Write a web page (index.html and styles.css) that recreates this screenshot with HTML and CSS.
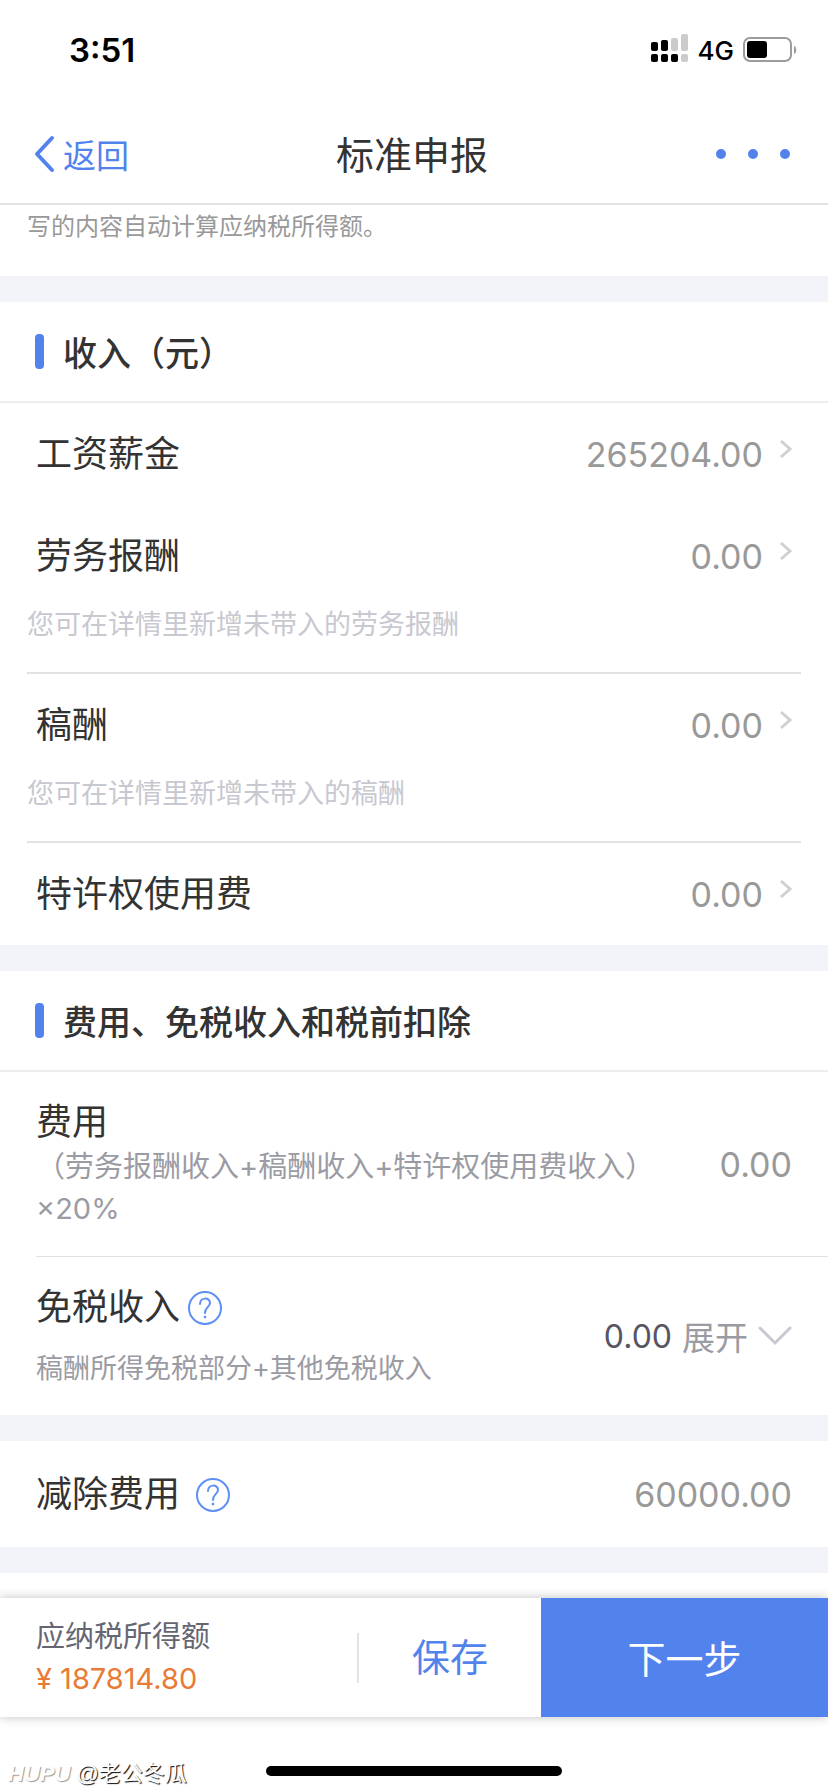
FILE: index.html
```html
<!DOCTYPE html>
<html lang="zh-CN">
<head>
    <meta charset="UTF-8">
    <meta name="viewport" content="width=device-width, initial-scale=1.0">
    <title>标准申报</title>
    <link rel="stylesheet" href="styles.css">
</head>
<body>
    <div class="screen">
        <div class="status-bar">
            <span class="time">3:51</span>
            <div class="status-icons">
                <svg class="signal" width="38" height="30" viewBox="0 0 38 30">
                    <g fill="#000">
                        <rect x="0" y="9" width="7" height="9" rx="2"/>
                        <rect x="10" y="7" width="7" height="11" rx="2"/>
                        <rect x="0" y="21" width="7" height="8" rx="2"/>
                        <rect x="10" y="21" width="7" height="8" rx="2"/>
                        <rect x="20" y="21" width="7" height="8" rx="2"/>
                    </g>
                    <g fill="#cbcbcb">
                        <rect x="20" y="5" width="7" height="13" rx="2"/>
                        <rect x="30" y="1" width="7" height="17" rx="2"/>
                        <rect x="30" y="21" width="7" height="8" rx="2"/>
                    </g>
                </svg>
                <span class="network">4G</span>
                <svg class="battery" width="54" height="26" viewBox="0 0 54 26">
                    <rect x="1" y="1" width="47" height="23" rx="6" fill="none" stroke="#9c9c9c" stroke-width="2"/>
                    <rect x="4" y="4" width="20" height="17" rx="3" fill="#000"/>
                    <path d="M51 9c3 1 3 7 0 8z" fill="#9c9c9c"/>
                </svg>
            </div>
        </div>

        <header class="nav-bar">
            <a class="back" href="#">
                <svg width="21" height="38" viewBox="0 0 21 38">
                    <path d="M18 3L3 19l15 16" fill="none" stroke="#5283ec" stroke-width="4" stroke-linecap="round" stroke-linejoin="round"/>
                </svg>
                返回
            </a>
            <h1>标准申报</h1>
            <button class="more" type="button" aria-label="更多">
                <svg width="74" height="10" viewBox="0 0 74 10" fill="#5283ec">
                    <circle cx="5" cy="5" r="5"/>
                    <circle cx="37" cy="5" r="5"/>
                    <circle cx="69" cy="5" r="5"/>
                </svg>
            </button>
        </header>

        <main>
            <p class="note">写的内容自动计算应纳税所得额。</p>

            <section class="card">
                <h2>收入（元）</h2>
                <a class="row" href="#">
                    <span class="label">工资薪金</span>
                    <span class="value">265204.00</span>
                    <svg class="arrow" width="13" height="20" viewBox="0 0 13 20"><path d="M2 2l9 8-9 8"/></svg>
                </a>
                <a class="row" href="#">
                    <span class="label">劳务报酬</span>
                    <span class="value">0.00</span>
                    <svg class="arrow" width="13" height="20" viewBox="0 0 13 20"><path d="M2 2l9 8-9 8"/></svg>
                </a>
                <p class="hint">您可在详情里新增未带入的劳务报酬</p>
                <a class="row" href="#">
                    <span class="label">稿酬</span>
                    <span class="value">0.00</span>
                    <svg class="arrow" width="13" height="20" viewBox="0 0 13 20"><path d="M2 2l9 8-9 8"/></svg>
                </a>
                <p class="hint">您可在详情里新增未带入的稿酬</p>
                <a class="row" href="#">
                    <span class="label">特许权使用费</span>
                    <span class="value">0.00</span>
                    <svg class="arrow" width="13" height="20" viewBox="0 0 13 20"><path d="M2 2l9 8-9 8"/></svg>
                </a>
            </section>

            <section class="card">
                <h2>费用、免税收入和税前扣除</h2>
                <div class="detail">
                    <div class="detail-text">
                        <div class="label">费用</div>
                        <p class="formula">（劳务报酬收入+稿酬收入+特许权使用费收入）×20%</p>
                    </div>
                    <span class="value">0.00</span>
                </div>
                <div class="detail">
                    <div class="detail-text">
                        <div class="label">
                            免税收入
                            <button class="help" type="button" aria-label="免税收入说明">
                                <svg width="34" height="34" viewBox="0 0 34 34" fill="none" stroke="#5e8ff2" stroke-width="2">
                                    <circle cx="17" cy="17" r="16"/>
                                    <path d="M12 13c0-7 10-7 10-1 0 4-5 4-5 10" stroke-linecap="round"/>
                                    <circle cx="17" cy="26" r="1" fill="#5e8ff2" stroke-width="1"/>
                                </svg>
                            </button>
                        </div>
                        <p class="sub">稿酬所得免税部分+其他免税收入</p>
                    </div>
                    <button class="expand" type="button">
                        <span class="amount">0.00</span>
                        展开
                        <svg width="34" height="20" viewBox="0 0 34 20"><path d="M2 2l15 15L32 2" fill="none" stroke="#c8c8d0" stroke-width="3" stroke-linecap="round"/></svg>
                    </button>
                </div>
            </section>

            <section class="card deduction">
                <div class="label">
                    减除费用
                    <button class="help" type="button" aria-label="减除费用说明">
                        <svg width="34" height="34" viewBox="0 0 34 34" fill="none" stroke="#5e8ff2" stroke-width="2">
                            <circle cx="17" cy="17" r="16"/>
                            <path d="M12 13c0-7 10-7 10-1 0 4-5 4-5 10" stroke-linecap="round"/>
                            <circle cx="17" cy="26" r="1" fill="#5e8ff2" stroke-width="1"/>
                        </svg>
                    </button>
                </div>
                <span class="value">60000.00</span>
            </section>

            <section class="card next-card"></section>
        </main>

        <footer class="action-bar">
            <div class="total">
                <div>应纳税所得额</div>
                <div class="total-amount">¥ 187814.80</div>
            </div>
            <button class="save" type="button">保存</button>
            <button class="next" type="button">下一步</button>
        </footer>

        <div class="home-area">
            <div class="watermark"><em>HUPU</em> @老公冬瓜</div>
            <div class="home-indicator"></div>
        </div>
    </div>
</body>
</html>
```
FILE: styles.css
```css
* {
    box-sizing: border-box;
}
body {
    margin: 0;
    background-color: #fff;
    color: #333;
    font-family: Inter, "Noto Sans CJK SC", sans-serif;
}
h1, h2, p {
    margin: 0;
    font-weight: 400;
}
a {
    color: inherit;
    text-decoration: none;
}
button {
    padding: 0;
    border: none;
    background: none;
    color: inherit;
    font-family: inherit;
    cursor: pointer;
}
svg {
    display: block;
    flex: none;
}
.screen {
    display: flex;
    flex-direction: column;
    min-height: 100vh;
}

/* status bar */
.status-bar {
    display: flex;
    justify-content: space-between;
    align-items: center;
    height: 104px;
    padding: 0 31px 4px 69px;
    color: #000;
}
.time {
    font-size: 33px;
    font-weight: 600;
}
.status-icons {
    display: flex;
    align-items: center;
    gap: 9px;
}
.signal {
    margin-bottom: 4px;
}
.network {
    font-size: 26px;
    font-weight: 500;
}

/* navigation */
.nav-bar {
    display: grid;
    grid-template-columns: 1fr auto 1fr;
    align-items: center;
    height: 101px;
    padding: 0 38px 0 34px;
    border-bottom: 2px solid #e2e2e2;
}
.back {
    display: flex;
    align-items: center;
    gap: 8px;
    color: #5283ec;
    font-size: 33px;
}
.nav-bar h1 {
    padding-bottom: 2px;
    font-size: 38px;
}
.more {
    justify-self: end;
}

/* content */
main {
    flex: 1;
    background-color: #f3f4f9;
}
.note {
    padding: 4px 27px 31px;
    background-color: #fff;
    color: #999;
    font-size: 24px;
    line-height: 36px;
}
.card {
    margin-top: 26px;
    background-color: #fff;
}
.card h2 {
    display: flex;
    align-items: center;
    gap: 19px;
    height: 101px;
    padding-left: 35px;
    border-bottom: 2px solid #ededed;
    font-size: 34px;
    font-weight: 500;
}
.card h2::before {
    content: "";
    width: 9px;
    height: 35px;
    border-radius: 4px;
    background-color: #5283ec;
}
.row {
    display: flex;
    align-items: center;
    height: 102px;
    padding: 0 36px;
}
.label {
    display: flex;
    align-items: center;
    font-size: 36px;
    line-height: 48px;
}
.value {
    margin-left: auto;
    color: #999;
    font-size: 34px;
}
.arrow {
    margin: 0 0 10px 16px;
    fill: none;
    stroke: #d0d0d4;
    stroke-width: 3;
}
.hint {
    margin: 0 27px;
    padding-bottom: 29px;
    border-bottom: 2px solid #e2e2e2;
    color: #c8c8d0;
    font-size: 27px;
    line-height: 36px;
}
.detail {
    display: flex;
    align-items: center;
    margin-left: 36px;
    padding-right: 36px;
}
.detail + .detail {
    border-top: 1px solid #e2e2e2;
}
.detail-text {
    flex: 1;
    padding: 26px 0;
}
.formula {
    max-width: 640px;
    color: #9b9ba3;
    font-size: 29px;
    line-height: 42px;
}
.sub {
    padding: 20px 0 2px;
    color: #9b9ba3;
    font-size: 27px;
    line-height: 36px;
}
.help {
    margin: 2px 0 0 8px;
}
.expand {
    display: flex;
    align-items: center;
    gap: 10px;
    color: #9b9ba3;
    font-size: 33px;
}
.amount {
    color: #555563;
    font-size: 32px;
}
.deduction {
    display: flex;
    align-items: center;
    height: 106px;
    padding: 0 36px;
}
.deduction .help {
    margin-left: 16px;
}
.next-card {
    height: 25px;
}

/* bottom actions */
.action-bar {
    position: relative;
    display: grid;
    grid-template-columns: 357fr 184fr 287fr;
    align-items: center;
    height: 119px;
    background-color: #fff;
    box-shadow: 0 0 10px rgba(0, 0, 0, 0.25);
}
.total {
    padding-left: 36px;
    color: #666672;
    font-size: 29px;
    line-height: 42px;
}
.total-amount {
    color: #e87b35;
}
.save {
    height: 50px;
    padding-bottom: 2px;
    border-left: 2px solid #e2e2e8;
    color: #5283ec;
    font-size: 38px;
    line-height: 48px;
}
.next {
    height: 100%;
    padding-bottom: 2px;
    background-color: #5283ec;
    color: #fff;
    font-size: 38px;
}
.home-area {
    position: relative;
    display: flex;
    justify-content: center;
    align-items: flex-end;
    height: 75px;
    padding-bottom: 16px;
}
.home-indicator {
    width: 296px;
    height: 10px;
    border-radius: 5px;
    background-color: #000;
}
.watermark {
    position: absolute;
    left: 8px;
    bottom: 2px;
    color: #fff;
    font-family: "Liberation Sans", "Noto Sans CJK SC", sans-serif;
    font-size: 22px;
    line-height: 32px;
    text-shadow: 1px 1px 1px #000;
}
.watermark em {
    font-weight: 700;
    text-shadow: 1px 1px 1px #999;
}
```
